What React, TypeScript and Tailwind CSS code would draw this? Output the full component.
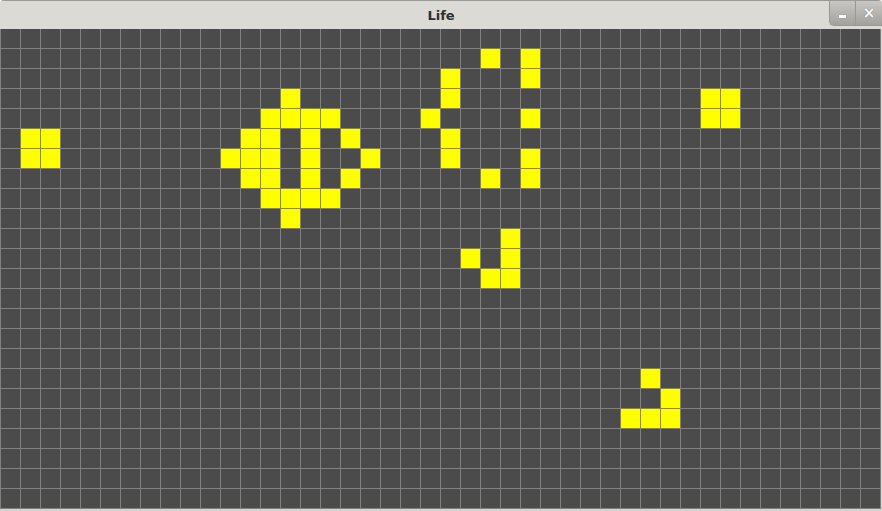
import React from "react";

const COLS = 44;
const ROWS = 24;

const alive: [number, number][] = [
  [1, 5], [2, 5], [1, 6], [2, 6],
  [14, 3],
  [13, 4], [14, 4], [15, 4], [16, 4],
  [12, 5], [13, 5], [15, 5], [17, 5],
  [11, 6], [12, 6], [13, 6], [15, 6], [18, 6],
  [12, 7], [13, 7], [15, 7], [17, 7],
  [13, 8], [14, 8], [15, 8], [16, 8],
  [14, 9],
  [24, 1], [26, 1],
  [22, 2], [26, 2],
  [22, 3],
  [21, 4], [26, 4],
  [22, 5],
  [22, 6], [26, 6],
  [24, 7], [26, 7],
  [25, 10], [23, 11], [25, 11], [24, 12], [25, 12],
  [35, 3], [36, 3], [35, 4], [36, 4],
  [32, 17], [33, 18], [31, 19], [32, 19], [33, 19],
];

const set = new Set(alive.map(([c, r]) => `${c},${r}`));

export default function App() {
  const cells: React.ReactNode[] = [];
  for (let r = 0; r < ROWS; r++) {
    for (let c = 0; c < COLS; c++) {
      const on = set.has(`${c},${r}`);
      cells.push(
        <div
          key={`${c}-${r}`}
          className={`w-[20px] h-[20px] border-l border-b border-[#808080] ${on ? "bg-[#ffff00]" : "bg-[#4b4b4b]"}`}
        />
      );
    }
  }
  return (
    <div
      className="w-[882px] h-[511px] bg-[#d6d4d0] flex flex-col overflow-hidden rounded-tl-[4px] rounded-tr-[4px]"
      style={{ fontFamily: '"DejaVu Sans", "Liberation Sans", sans-serif' }}
    >
      <div className="relative h-[29px] shrink-0 bg-[#dcdad5] border-t border-[#9a9995] flex items-center justify-center">
        <span className="text-[13px] font-bold text-[#2e2e2e] leading-none">Life</span>
        <div className="absolute right-0 top-0 flex h-[25px]">
          <div className="w-[26px] h-[25px] rounded-bl-[5px] bg-gradient-to-b from-[#c9c7c3] to-[#a4a29e] border-l border-b border-[#9a9894] flex items-center justify-center">
            <div className="w-[7px] h-[3px] bg-white mt-[7px] shadow-[0_0_1px_#666]" />
          </div>
          <div className="w-[27px] h-[25px] bg-gradient-to-b from-[#c9c7c3] to-[#a4a29e] border-l border-b border-[#9a9894] flex items-center justify-center">
            <span className="text-white text-[15px] font-bold leading-none [text-shadow:0_0_1px_#555]">×</span>
          </div>
        </div>
      </div>
      <div className="flex">
        <div className="grid grid-cols-[repeat(44,20px)] border-r border-[#808080]">
          {cells}
        </div>
      </div>
    </div>
  );
}
